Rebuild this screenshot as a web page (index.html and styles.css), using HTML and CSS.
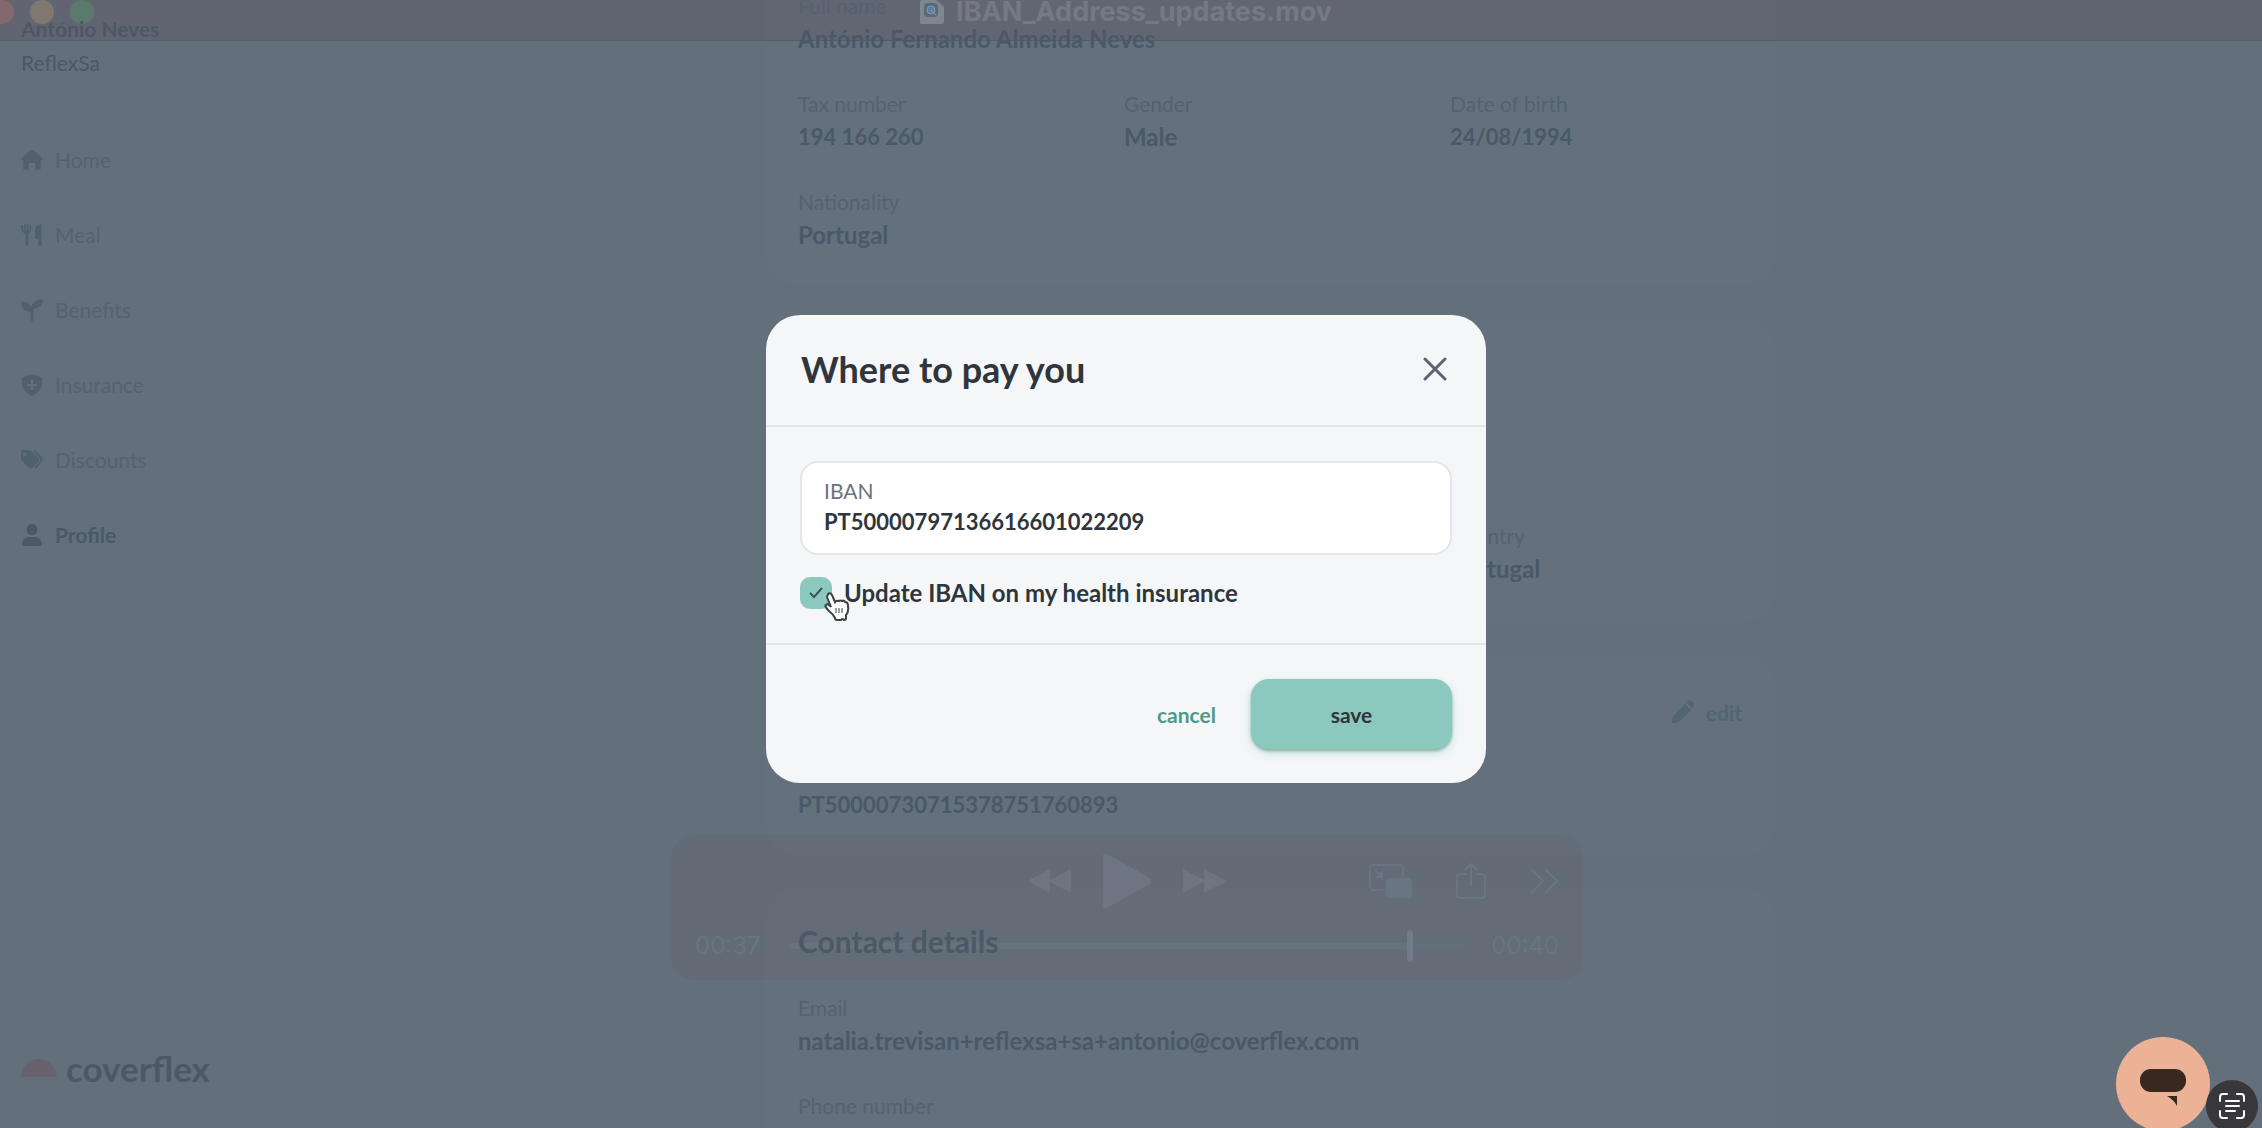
FILE: index.html
```html
<!DOCTYPE html>
<html lang="en">
<head>
<meta charset="utf-8">
<title>Coverflex – Profile</title>
<link rel="stylesheet" href="styles.css">
</head>
<body>
<div class="app">
  <aside class="sidebar">
    <div class="account">
      <strong class="account-name">António Neves</strong>
      <span class="account-company">ReflexSa</span>
    </div>
    <nav class="nav">
      <a href="#" class="nav-link"><svg class="nav-icon" viewBox="0 0 22 22"><path d="M11 0.500q.8 0 1.500.600l8.600 7.700q1.100 1.200-.1 2.200h-1.300v8.500q0 1.500-1.500 1.500h-3.700v-5q0-2-1.500-2h-4q-1.500 0-1.500 2v5H3.800q-1.500 0-1.500-1.500V11H1q-1.200-1-.1-2.200l8.600-7.700q.7-.6 1.500-.6z"/></svg>Home</a>
      <a href="#" class="nav-link"><svg class="nav-icon" viewBox="0 0 22 22"><path d="M.5 1h1.600v5h1V0h1.600v6h1V0h1.600v6h1V1h1.600q1 7-2.500 9v10.500q0 1.500-1.500 1.500t-1.500-1.500V10Q-.5 8 .500 1zM20.500 0v20.500q0 1.500-1.500 1.500t-1.500-1.500V15q-3.500 0-3.500-2V6q.5-5 6.500-6z"/></svg>Meal</a>
      <a href="#" class="nav-link"><svg class="nav-icon" viewBox="0 0 22 22"><path d="M0 3q8-1 10 5.500Q12 0 22 0q-.5 9-9.500 10v11q0 1-1.500 1t-1.500-1v-8Q.500 12.500 0 3z"/></svg>Benefits</a>
      <a href="#" class="nav-link"><svg class="nav-icon" viewBox="0 0 22 22"><path fill-rule="evenodd" d="M11 0l9.500 3.500q1 .5 1 1.500.5 12-10.500 17Q0 17 .5 5q0-1 1-1.500zM10 6v4H6v2h4v4h2v-4h4v-2h-4V6z"/></svg>Insurance</a>
      <a href="#" class="nav-link"><svg class="nav-icon" viewBox="0 0 22 22"><path fill-rule="evenodd" d="M1.500 1H9l8.500 8q1.500 1.700 0 3.500l-6 6.500q-1.500 1.500-3.200 0L0 11V2.500Q0 1 1.500 1zM4 3.500a1.700 1.700 0 1 0 .1 0z"/><path class="tag-edge" d="M13 1.500l6.500 6.700q2 2.300 0 4.600L14.500 19"/></svg>Discounts</a>
      <a href="#" class="nav-link active"><svg class="nav-icon" viewBox="0 0 22 22"><circle cx="11" cy="5.500" r="5.500"/><path d="M1 20q1-7 7.500-7h5q6.500 0 7.500 7 0 2-1.500 2h-17Q1 22 1 20z"/></svg>Profile</a>
    </nav>
    <a href="#" class="brand"><svg class="brand-mark" viewBox="0 0 36 18"><path d="M0 18Q3 0 18 0t18 18z"/></svg>coverflex</a>
  </aside>

  <main class="content">
    <section class="card">
      <dl class="fields">
        <div class="field wide"><dt>Full name</dt><dd>António Fernando Almeida Neves</dd></div>
        <div class="field number"><dt>Tax number</dt><dd>194 166 260</dd></div>
        <div class="field"><dt>Gender</dt><dd>Male</dd></div>
        <div class="field number"><dt>Date of birth</dt><dd>24/08/1994</dd></div>
        <div class="field"><dt>Nationality</dt><dd>Portugal</dd></div>
      </dl>
    </section>
    <section class="card card-address">
      <dl class="fields">
        <div class="field last"><dt>Country</dt><dd>Portugal</dd></div>
      </dl>
    </section>
    <section class="card">
      <header class="card-actions">
        <button type="button" class="edit"><svg class="edit-icon" viewBox="0 0 24 24"><path d="M1 23q0-6 2-8L14 4l6 6L9 21q-2 2-8 2zM15.500 2.500q3-3.500 6-.5t-.5 6z"/></svg>edit</button>
      </header>
      <dl class="fields">
        <div class="field wide number"><dt>IBAN</dt><dd>PT50000730715378751760893</dd></div>
      </dl>
    </section>
    <section class="card">
      <h2 class="card-title">Contact details</h2>
      <dl class="fields">
        <div class="field wide"><dt>Email</dt><dd>natalia.trevisan+reflexsa+sa+antonio@coverflex.com</dd></div>
        <div class="field wide"><dt>Phone number</dt></div>
      </dl>
    </section>
  </main>

  <div class="titlebar">
    <span class="light red"></span><span class="light amber"></span><span class="light green"></span>
    <div class="file-title">
      <svg class="file-icon" viewBox="0 0 24 24"><path class="sheet" d="M2 0h14l8 7v15q0 2-2 2H2q-2 0-2-2V2q0-2 2-2z"/><rect class="lens-box" x="4" y="3" width="14" height="14" rx="4"/><circle class="lens" cx="11" cy="10" r="4"/><path class="lens-mark" d="M11 10l5 5"/></svg>
      IBAN_Address_updates.mov
    </div>
  </div>

  <div class="player">
    <div class="player-buttons">
      <div class="transport">
        <button type="button" class="ctl" aria-label="Rewind"><svg width="44" height="26" viewBox="0 0 44 26"><path d="M22 1v24L1 14q-1-1 0-2zM43 1v24L22 14q-1-1 0-2z"/></svg></button>
        <button type="button" class="ctl" aria-label="Play"><svg width="50" height="56" viewBox="0 0 50 56"><path d="M1 3q0-4 4-2l43 24q3 3 0 6L5 55q-4 2-4-2z"/></svg></button>
        <button type="button" class="ctl" aria-label="Fast forward"><svg width="44" height="26" viewBox="0 0 44 26"><path d="M1 1v24l21-11q1-1 0-2zM22 1v24l21-11q1-1 0-2z"/></svg></button>
      </div>
      <div class="extras">
        <button type="button" class="ctl line" aria-label="Picture in picture"><svg width="44" height="36" viewBox="0 0 44 36"><path d="M16 27H5q-4 0-4-4V6q0-4 4-4h25q4 0 4 4v8M6 7l7 7M13 9v5H8z"/><rect class="solid" x="18" y="16" width="24" height="18" rx="3"/></svg></button>
        <button type="button" class="ctl line" aria-label="Share"><svg width="30" height="36" viewBox="0 0 30 36"><path d="M10 11H5q-4 0-4 4v16q0 4 4 4h20q4 0 4-4V15q0-4-4-4h-5M15 23V1M9 7l6-6 6 6"/></svg></button>
        <button type="button" class="ctl line" aria-label="More"><svg width="30" height="26" viewBox="0 0 30 26"><path d="M2 1l12 12L2 25M16 1l12 12-12 12"/></svg></button>
      </div>
    </div>
    <div class="timeline">
      <span>00:37</span>
      <input type="range" class="scrubber" aria-label="Position" min="0" max="40" value="37">
      <span>00:40</span>
    </div>
  </div>

  <div class="overlay">
    <form class="modal" role="dialog" aria-labelledby="modal-title">
      <header class="modal-header">
        <h1 class="modal-title" id="modal-title">Where to pay you</h1>
        <button type="button" class="close" aria-label="Close"><svg width="24" height="24" viewBox="0 0 24 24"><path d="M2 2l20 20M22 2L2 22"/></svg></button>
      </header>
      <div class="modal-body">
        <div class="input-box">
          <label for="iban">IBAN</label>
          <input id="iban" type="text" value="PT50000797136616601022209">
        </div>
        <div class="check-row">
          <span class="check">
            <input id="health" type="checkbox" checked>
            <svg class="tick" width="14" height="12" viewBox="0 0 14 12"><path d="M1 6l4 4 8-9"/></svg>
            <svg class="pointer" width="28" height="30" viewBox="0 0 28 30"><path d="M5 2q2-2 4 1l3 7q1-2 4-1 1-1 3 0 2-1 3 1 3 0 3 4 1 6-2 9v3q0 2-2 2-1-2-3 0h-4q-2 0-2-2-2-4-6-7-5-5-3-6 2-2 5 2L4 5z"/><path class="knuckles" d="M13 16v5M16 16v5M19 16v5"/></svg>
          </span>
          <label for="health">Update IBAN on my health insurance</label>
        </div>
      </div>
      <footer class="modal-footer">
        <button type="button" class="cancel">cancel</button>
        <button type="submit" class="save">save</button>
      </footer>
    </form>
  </div>

  <button type="button" class="chat" aria-label="Chat"><svg width="46" height="38" viewBox="0 0 46 38"><rect width="46" height="23" rx="11"/><path d="M27 27h10v10q-3-6-10-10z"/></svg></button>
  <button type="button" class="scan" aria-label="Scan text"><svg width="28" height="28" viewBox="0 0 28 28"><path class="corners" d="M2 9V5q0-3 3-3h4M19 2h4q3 0 3 3v4M26 19v4q0 3-3 3h-4M9 26H5q-3 0-3-3v-4"/><path class="lines" d="M8 9h13M8 14h13M8 19h9"/></svg></button>
</div>
</body>
</html>
```
FILE: styles.css
```css
:root {
  --page: #636f7b;
  --card: #64707c;
  --dim-strong: #4b5866;
  --dim: #55626f;
  --ghost: #6c7581;
  --ghost-line: #697581;
  --ink: #2f353c;
  --mint: #8bc9be;
}

* { box-sizing: border-box; }

body {
  margin: 0;
  font-family: Lato, "Open Sans", sans-serif;
  font-size: 21px;
  background: var(--page);
}

button {
  font: inherit;
  border: 0;
  padding: 0;
  background: none;
  cursor: pointer;
}

a { color: inherit; text-decoration: none; }
h1, h2, dl, dd { margin: 0; }
svg { display: block; flex: none; }

.app {
  position: relative;
  display: flex;
  height: 100vh;
  padding-right: 10px;
  overflow: hidden;
}

/* Sidebar */
.sidebar {
  display: flex;
  flex-direction: column;
  width: 288px;
  flex: none;
  padding: 12px 21px 38px;
  color: var(--dim);
}

.account {
  position: relative;
  z-index: 1;
  display: flex;
  flex-direction: column;
  line-height: 34px;
  color: var(--dim-strong);
}

.nav {
  display: flex;
  flex-direction: column;
  gap: 43px;
  margin-top: 64px;
}

.nav-link {
  display: flex;
  align-items: center;
  gap: 12px;
  line-height: 32px;
}

.nav-icon { width: 22px; height: 22px; fill: #51606f; }
.tag-edge { fill: none; stroke: #51606f; stroke-width: 2; }
.active { color: var(--dim-strong); font-weight: 700; }
.active .nav-icon { fill: var(--dim-strong); }

.brand {
  display: flex;
  align-items: center;
  gap: 9px;
  margin-top: auto;
  font-size: 35px;
  line-height: 44px;
  font-weight: 700;
  color: #4a5868;
}

.brand-mark { width: 36px; height: 18px; fill: #68616e; }

/* Profile cards */
.content {
  flex: 1;
  display: flex;
  flex-direction: column;
  align-items: center;
  gap: 34px;
  margin-top: -43px;
}

.card {
  width: 100%;
  max-width: 1010px;
  flex: none;
  padding: 33px;
  border-radius: 28px;
  background: var(--card);
}

.card-address { padding: 201px 33px 36px; }

.fields, .card-title {
  position: relative;
  z-index: 1;
}

.fields {
  display: grid;
  grid-template-columns: repeat(3, 326px);
  row-gap: 32px;
}

.wide { grid-column: 1 / -1; }
.last { grid-column: 3; }

.field dt { line-height: 32px; color: var(--dim); }

.field dd {
  font-size: 24px;
  line-height: 34px;
  font-weight: 700;
  color: var(--dim-strong);
}

.number dd { font-size: 22px; }

.card-actions {
  display: flex;
  justify-content: flex-end;
  height: 46px;
  margin-bottom: 21px;
}

.edit {
  display: flex;
  align-items: center;
  gap: 11px;
  font-weight: 700;
  color: #4f676e;
}

.edit-icon { width: 24px; height: 24px; fill: #4f676e; }

.card-title {
  margin-bottom: 32px;
  font-size: 30px;
  line-height: 38px;
  color: var(--dim-strong);
}

/* Window title bar */
.titlebar {
  position: absolute;
  inset: 0 0 auto;
  display: flex;
  gap: 16px;
  height: 41px;
  padding-right: 10px;
  border-bottom: 1px solid #525c66;
  background: rgba(94, 88, 96, 0.38);
}

.light { width: 24px; height: 24px; border-radius: 50%; }
.red { width: 14px; border-radius: 0 12px 12px 0; background: #836870; }
.amber { background: #7e786f; }
.green { background: #5b7a6e; }

.file-title {
  position: absolute;
  inset: 0 10px auto 0;
  display: flex;
  justify-content: center;
  gap: 12px;
  font: 700 27px/24px Inter, sans-serif;
  color: #747985;
}

.file-icon { width: 24px; height: 24px; }
.sheet { fill: #7f8591; }
.lens-box { fill: #5b6875; }
.lens { fill: #5a7fa3; stroke: #8796a4; stroke-width: 1; }
.lens-mark { fill: none; stroke: #8796a4; stroke-width: 1; }

/* Video controls */
.player {
  position: absolute;
  left: calc(50% - 460px);
  bottom: 148px;
  width: 912px;
  height: 145px;
  padding: 18px 24px 14px;
  border-radius: 24px;
  background: rgba(94, 88, 96, 0.15);
}

.player-buttons {
  display: grid;
  grid-template-columns: 1fr auto 1fr;
  align-items: center;
}

.transport { grid-column: 2; display: flex; align-items: center; gap: 30px; }
.extras { display: flex; align-items: center; justify-content: flex-end; gap: 43px; }
.ctl { fill: var(--ghost); }
.line { fill: none; stroke: var(--ghost-line); stroke-width: 2; }
.solid { fill: var(--ghost-line); }

.timeline {
  display: flex;
  align-items: center;
  gap: 28px;
  margin-top: 13px;
  font: 24px/48px Inter, sans-serif;
  color: var(--ghost-line);
}

.scrubber {
  flex: 1;
  min-width: 0;
  height: 32px;
  margin: 0;
  appearance: none;
  background: linear-gradient(to right, #68727e 92%, #63707b 92%) center / 100% 6px no-repeat;
}

.scrubber::-webkit-slider-thumb {
  appearance: none;
  width: 6px;
  height: 32px;
  border-radius: 3px;
  background: #727b87;
}

/* Payment dialog */
.overlay {
  position: absolute;
  z-index: 2;
  inset: 0 10px 30px 0;
  display: grid;
  place-items: center;
}

.modal {
  width: 720px;
  border-radius: 34px;
  background: #f4f6f8;
  color: var(--ink);
}

.modal-header {
  display: flex;
  align-items: center;
  justify-content: space-between;
  padding: 30px 39px 32px 35px;
  border-bottom: 2px solid #e3e6eb;
}

.modal-title { font-size: 36px; line-height: 48px; }
.close svg { fill: none; stroke: #5c6470; stroke-width: 3; stroke-linecap: round; }

.modal-body { padding: 34px; }

.input-box {
  display: flex;
  flex-direction: column;
  padding: 13px 22px 15px;
  border: 2px solid #e3e6ea;
  border-radius: 18px;
  background: #fff;
}

.input-box label { line-height: 30px; color: #6b7280; }

.input-box input {
  height: 32px;
  padding: 0;
  border: 0;
  outline: 0;
  font: 700 22px/32px Lato, sans-serif;
  color: var(--ink);
}

.check-row {
  display: flex;
  align-items: center;
  gap: 12px;
  margin-top: 22px;
  font-size: 24px;
  line-height: 32px;
  font-weight: 700;
}

.check {
  position: relative;
  display: grid;
  place-items: center;
}

.check input {
  grid-area: 1 / 1;
  appearance: none;
  width: 32px;
  height: 32px;
  margin: 0;
  border-radius: 10px;
  background: var(--mint);
}

.tick { grid-area: 1 / 1; fill: none; stroke: #3a5552; stroke-width: 2; }

.pointer {
  position: absolute;
  left: 23px;
  top: 15px;
  fill: #fff;
  stroke: #3d4248;
  stroke-width: 2;
}

.knuckles { stroke-width: 1; }

.modal-footer {
  display: flex;
  align-items: center;
  justify-content: flex-end;
  gap: 35px;
  padding: 34px;
  border-top: 2px solid #e3e6eb;
}

.cancel { color: #4f9a87; font-weight: 700; }

.save {
  width: 201px;
  height: 70px;
  border-radius: 18px;
  background: var(--mint);
  box-shadow: 0 2px 3px #8cb0a8, 0 4px 8px #bfe0da;
  font-weight: 700;
  color: var(--ink);
}

/* Floating buttons */
.chat, .scan {
  position: absolute;
  display: grid;
  place-items: center;
  border-radius: 50%;
}

.chat {
  right: 52px;
  bottom: -3px;
  width: 94px;
  height: 94px;
  padding-top: 8px;
  background: #ebb295;
  fill: #38281f;
}

.scan {
  right: 4px;
  bottom: -4px;
  width: 52px;
  height: 52px;
  background: #38373c;
  fill: none;
  stroke: #fff;
  stroke-linecap: round;
}

.corners { stroke-width: 2; }
.lines { stroke-width: 2; }
```
